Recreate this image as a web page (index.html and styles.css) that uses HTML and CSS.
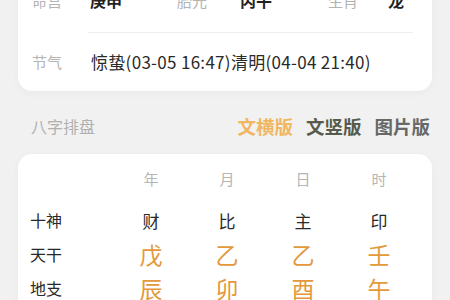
FILE: index.html
```html
<!DOCTYPE html>
<html lang="zh">
<head>
<meta charset="utf-8">
<link rel="stylesheet" href="styles.css">
</head>
<body>
<div class="page">
  <section class="card info">
    <div class="info-grid">
      <span class="lbl">命宫</span><span class="val">庚申</span>
      <span class="lbl">胎元</span><span class="val">丙午</span>
      <span class="lbl">生肖</span><span class="val">龙</span>
    </div>
    <div class="divider"></div>
    <div class="jieqi">
      <span class="lbl jq-lbl">节气</span>
      <span class="jq-val">惊蛰(03-05 16:47)清明(04-04 21:40)</span>
    </div>
  </section>

  <div class="section-head">
    <span class="section-title">八字排盘</span>
    <div class="tabs">
      <span class="tab active">文横版</span>
      <span class="tab second">文竖版</span>
      <span class="tab third">图片版</span>
    </div>
  </div>

  <section class="card chart">
    <div class="row head">
      <span></span><span>年</span><span>月</span><span>日</span><span>时</span>
    </div>
    <div class="row shishen">
      <span class="rlbl">十神</span><span>财</span><span>比</span><span>主</span><span>印</span>
    </div>
    <div class="row gan">
      <span class="rlbl">天干</span><span>戊</span><span>乙</span><span>乙</span><span>壬</span>
    </div>
    <div class="row gan">
      <span class="rlbl">地支</span><span>辰</span><span>卯</span><span>酉</span><span>午</span>
    </div>
  </section>
</div>
</body>
</html>
```

FILE: styles.css
```css
html, body {
  margin: 0;
  padding: 0;
  background: #f1f1f1;
  font-family: "Noto Sans CJK SC", "Noto Sans", sans-serif;
}
.page {
  width: 450px;
  height: 300px;
  padding: 0 18px;
  box-sizing: border-box;
  overflow: hidden;
}
.card {
  background: #fff;
  border-radius: 14px;
  box-shadow: 0 2px 8px rgba(0,0,0,0.04);
}
.info {
  margin-top: -32px;
  padding: 0 19px 0 14px;
}
.info-grid {
  display: grid;
  grid-template-columns: 58px 87px 63px 88px 60px 1fr;
  align-items: center;
  height: 64px;
}
.lbl {
  color: #b3b3b3;
  font-size: 15px;
}
.val {
  color: #222;
  font-size: 16px;
  font-weight: 700;
}
.divider {
  height: 1px;
  background: #eeeeee;
  margin-left: 56px;
}
.jieqi {
  display: flex;
  align-items: center;
  height: 57px;
  padding-bottom: 1px;
}
.jq-lbl {
  width: 59px;
  flex: none;
}
.jq-val {
  color: #2a2a2a;
  font-size: 17px;
  letter-spacing: 0.3px;
}
.section-head {
  display: flex;
  align-items: center;
  justify-content: space-between;
  height: 57px;
  padding: 6px 2px 0 13px;
}
.section-title {
  color: #b0b0b0;
  font-size: 16px;
}
.tabs {
  display: flex;
  gap: 13px;
}
.tab {
  font-size: 18.5px;
  font-weight: 700;
}
.tab.active { color: #f1b660; }
.tab.second { color: #565b4c; }
.tab.third { color: #686868; }
.chart {
  padding: 7px 16px 0 12px;
  height: 200px;
  box-sizing: border-box;
}
.row {
  display: grid;
  grid-template-columns: 83px repeat(4, 76px);
  align-items: center;
  height: 34px;
}
.row > span:not(.rlbl) {
  text-align: center;
}
.head {
  color: #b5b5b5;
  font-size: 15px;
  margin-bottom: 8px;
}
.rlbl {
  color: #2a2a2a;
  font-size: 16px;
}
.shishen span:not(.rlbl) {
  color: #2a2a2a;
  font-size: 17px;
}
.gan span:not(.rlbl) {
  color: #e3993b;
  font-size: 23px;
}
```
